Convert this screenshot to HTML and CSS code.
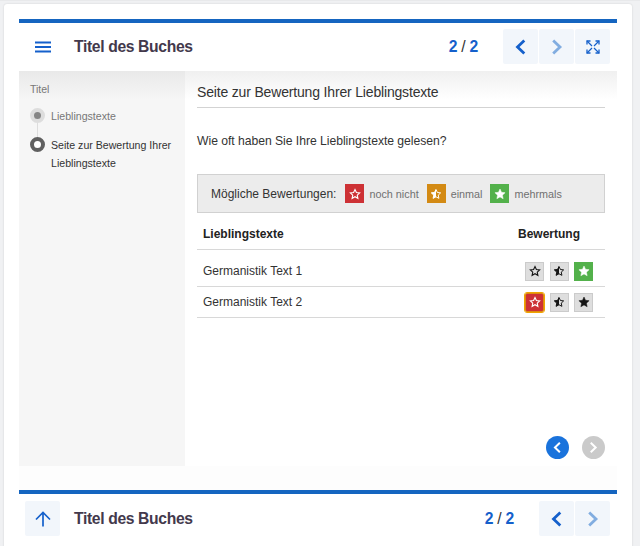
FILE: index.html
```
<!DOCTYPE html>
<html lang="de">
<head>
<meta charset="utf-8">
<title>Titel des Buches</title>
<link rel="stylesheet" href="styles.css">
</head>
<body>
<svg class="defs" width="0" height="0" aria-hidden="true">
  <symbol id="star" viewBox="0 0 24 24"><path d="M12 2l3 6.600 7.200.8-5.400 4.900 1.500 7.100L12 17.800l-6.300 3.600 1.500-7.100L1.800 9.400 9 8.600z" fill="currentColor" stroke="currentColor" stroke-width="1"/></symbol>
  <symbol id="star-empty" viewBox="0 0 24 24"><path d="M12 3l2.800 6 6.500.8-4.800 4.400 1.300 6.500L12 17.500l-5.800 3.200 1.300-6.500-4.800-4.400L9.200 9z" fill="none" stroke="currentColor" stroke-width="2.200"/></symbol>
  <symbol id="star-half" viewBox="0 0 24 24"><path d="M12 3l2.800 6 6.500.8-4.800 4.400 1.300 6.500L12 17.500l-5.800 3.200 1.300-6.500-4.800-4.400L9.200 9z" fill="none" stroke="currentColor" stroke-width="2"/><path d="M12 2v15.500l-6 3.500 1.400-7L2 9.500 9 8.700z" fill="currentColor"/></symbol>
  <symbol id="left" viewBox="0 0 18 18"><path d="M12.300 2.500L5.500 9l6.800 6.500" fill="none" stroke="currentColor" stroke-width="2.800"/></symbol>
  <symbol id="right" viewBox="0 0 18 18"><path d="M5.200 2.500L12 9l-6.800 6.500" fill="none" stroke="currentColor" stroke-width="2.800"/></symbol>
</svg>
<main class="card">
  <section class="book">
    <header class="bar">
      <div class="menu"><svg width="16" height="12" viewBox="0 0 16 12"><path d="M0 1.500h16M0 6h16M0 10.500h16" stroke="currentColor" stroke-width="2"/></svg></div>
      <h1>Titel des Buches</h1>
      <div class="pages"><b>2</b> <span>/</span> <b>2</b></div>
      <nav class="buttons">
        <a class="btn"><svg width="18" height="18"><use href="#left"/></svg></a>
        <a class="btn off"><svg width="18" height="18"><use href="#right"/></svg></a>
        <a class="btn"><svg width="14" height="14" viewBox="0 0 14 14" fill="none" stroke="currentColor"><path d="M1 4.500V1h3.500M9.500 1H13v3.500M13 9.500V13H9.500M4.500 13H1V9.500" stroke-width="1.300"/><path d="M1 1l5 5M13 1L8 6M13 13L8 8M1 13l5-5" stroke-width="1.200"/></svg></a>
      </nav>
    </header>
    <div class="body">
      <aside class="side">
        <p class="side-title">Titel</p>
        <ul class="steps">
          <li><i class="dot done"></i><span>Lieblingstexte</span></li>
          <li class="current"><i class="dot"></i><span>Seite zur Bewertung Ihrer Lieblingstexte</span></li>
        </ul>
      </aside>
      <article class="content">
        <h2>Seite zur Bewertung Ihrer Lieblingstexte</h2>
        <p class="question">Wie oft haben Sie Ihre Lieblingstexte gelesen?</p>
        <div class="legend">
          <span class="legend-title">Mögliche Bewertungen:</span>
          <i class="rate red"><svg><use href="#star-empty"/></svg></i><span class="label">noch nicht</span>
          <i class="rate orange"><svg><use href="#star-half"/></svg></i><span class="label">einmal</span>
          <i class="rate green"><svg><use href="#star"/></svg></i><span class="label">mehrmals</span>
        </div>
        <div class="table">
          <div class="row head"><span>Lieblingstexte</span><span>Bewertung</span></div>
          <div class="row first"><span>Germanistik Text 1</span>
            <div class="rates"><i class="rate"><svg><use href="#star-empty"/></svg></i><i class="rate"><svg><use href="#star-half"/></svg></i><i class="rate green"><svg><use href="#star"/></svg></i></div></div>
          <div class="row"><span>Germanistik Text 2</span>
            <div class="rates"><i class="rate red focus"><svg><use href="#star-empty"/></svg></i><i class="rate"><svg><use href="#star-half"/></svg></i><i class="rate"><svg><use href="#star"/></svg></i></div></div>
        </div>
        <div class="pager">
          <a class="round"><svg width="13" height="13"><use href="#left"/></svg></a>
          <a class="round gray"><svg width="13" height="13"><use href="#right"/></svg></a>
        </div>
      </article>
    </div>
    <div class="gap"></div>
    <footer class="bar bottom">
      <div class="menu btn"><svg width="16" height="16" viewBox="0 0 16 16"><path d="M8 15.500V2M1 8.500l7-7 7 7" fill="none" stroke="currentColor" stroke-width="1.700"/></svg></div>
      <h1>Titel des Buches</h1>
      <div class="pages"><b>2</b> <span>/</span> <b>2</b></div>
      <nav class="buttons">
        <a class="btn"><svg width="18" height="18"><use href="#left"/></svg></a>
        <a class="btn off"><svg width="18" height="18"><use href="#right"/></svg></a>
      </nav>
    </footer>
  </section>
</main>
</body>
</html>
```
FILE: styles.css
```
* { box-sizing: border-box; }
body {
  margin: 0;
  height: 546px;
  overflow: hidden;
  padding: 4px 8px 0 4px;
  background: #f0f1f3;
  border-top: 1px solid #e8e9eb;
  font-family: "Liberation Sans", Arial, sans-serif;
  font-size: 12px;
  color: #333;
}
.defs { display: block; height: 0; }
svg { display: block; }
h1, h2, p, ul { margin: 0; padding: 0; }
.card {
  height: 560px;
  margin-top: -1px;
  padding: 15px 15px 0;
  background: #fff;
  border-radius: 3px;
  box-shadow: 0 0 2px rgba(0, 0, 0, .15);
}
.bar {
  display: flex;
  align-items: center;
  height: 52px;
  padding: 0 7px 1px 6px;
  border-top: 4px solid #1565c0;
  color: #1560cb;
}
.menu {
  display: flex;
  align-items: center;
  justify-content: center;
  width: 35px;
  height: 35px;
}
h1 {
  flex: 1;
  margin-left: 14px;
  font-size: 15.700px;
  letter-spacing: -.36px;
  line-height: 20px;
  color: #43394c;
}
.pages {
  margin-right: 25px;
  font-size: 15.700px;
  letter-spacing: -.25px;
  line-height: 20px;
}
.pages span { color: #333; }
.buttons { display: flex; gap: 1px; }
.btn {
  display: flex;
  align-items: center;
  justify-content: center;
  width: 35px;
  height: 35px;
  background: #f2f6fb;
  border-radius: 2px;
}
.off { color: #82ade0; }
.body {
  display: flex;
  height: 395px;
  background: linear-gradient(#f0f0f0, #fff 29px);
}
.side {
  width: 166px;
  padding: 9px 0 0 11px;
  background: linear-gradient(#e9e9e9, #f6f6f6 29px);
}
.side-title { font-size: 10.500px; line-height: 18px; color: #777; }
.steps { list-style: none; margin-top: 9px; font-size: 10.600px; line-height: 18px; }
.steps li { display: flex; align-items: flex-start; gap: 6px; color: #777; padding-bottom: 11px; }
.steps .current { color: #333; }
.dot {
  position: relative;
  flex: none;
  width: 15px;
  height: 15px;
  margin-top: 1px;
  border: 4px solid #606060;
  border-radius: 50%;
  background: #fff;
}
.done { border-color: #ddd; background: #858585; }
.done::after {
  content: "";
  position: absolute;
  left: 3px;
  top: 11px;
  width: 1px;
  height: 14px;
  background: #ddd;
}
.content {
  display: flex;
  flex-direction: column;
  flex: 1;
  padding: 10px 12px 7px 12px;
}
h2 {
  height: 27px;
  padding-top: 1px;
  font-size: 14px;
  letter-spacing: -.17px;
  font-weight: 400;
  line-height: 20px;
  border-bottom: 1px solid #d3d3d3;
}
.question { margin-top: 23px; font-size: 12.200px; letter-spacing: -.04px; line-height: 20px; }
.legend {
  display: flex;
  align-items: center;
  height: 39px;
  margin-top: 23px;
  padding-left: 13px;
  background: #ececec;
  border: 1px solid #d1d1d1;
}
.legend-title { margin-right: 9px; }
.label { margin: 0 8px 0 5px; font-size: 10.800px; color: #707070; }
.rate {
  display: flex;
  align-items: center;
  justify-content: center;
  width: 19px;
  height: 19px;
  border: 1px solid #cbcbcb;
  background: #dedede;
  color: #151515;
}
.rate svg { width: 12px; height: 12px; }
.red { background: #cd3135; border-color: #cd3135; color: #fff; }
.orange { background: #d38a14; border-color: #d38a14; color: #fff; }
.green { background: #53b14b; border-color: #53b14b; color: #fff; }
.focus { outline: 1px solid #f0a400; border-color: #dd8a10; border-radius: 2px; }
.row {
  display: flex;
  align-items: center;
  justify-content: space-between;
  height: 31px;
  padding: 0 12px 0 6px;
  border-bottom: 1px solid #d8d8d8;
}
.head { height: 37px; padding: 5px 25px 0 6px; font-weight: 700; color: #222; }
.first { height: 37px; padding: 6px 12px 0 6px; }
.rates { display: flex; gap: 5.500px; }
.pager { display: flex; justify-content: flex-end; gap: 13px; margin-top: auto; }
.round {
  display: flex;
  align-items: center;
  justify-content: center;
  width: 23px;
  height: 23px;
  border-radius: 50%;
  background: #1a73dc;
  color: #fff;
}
.gray { background: #cacaca; }
.gap { height: 24px; background: #fdfdfd; }
.bottom { padding: 1px 7px 0 6px; }
```
